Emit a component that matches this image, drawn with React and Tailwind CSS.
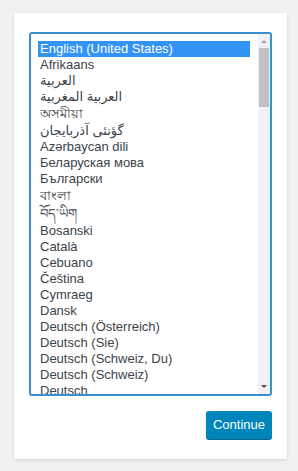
import React from 'react';

// tall: scripts whose rows render a bit taller in the native list
const languages = [
  { name: 'English (United States)' },
  { name: 'Afrikaans' },
  { name: 'العربية' },
  { name: 'العربية المغربية' },
  { name: 'অসমীয়া', tall: true },
  { name: 'گؤنئی آذربایجان' },
  { name: 'Azərbaycan dili' },
  { name: 'Беларуская мова' },
  { name: 'Български' },
  { name: 'বাংলা', tall: true },
  { name: 'བོད་ཡིག', tall: true },
  { name: 'Bosanski' },
  { name: 'Català' },
  { name: 'Cebuano' },
  { name: 'Čeština' },
  { name: 'Cymraeg' },
  { name: 'Dansk' },
  { name: 'Deutsch (Österreich)' },
  { name: 'Deutsch (Sie)' },
  { name: 'Deutsch (Schweiz, Du)' },
  { name: 'Deutsch (Schweiz)' },
  { name: 'Deutsch' },
];

export default function App() {
  return (
    <div
      className="min-h-screen bg-[#f1f1f1] pt-[13px] pl-[14px]"
      style={{ fontFamily: '"Liberation Sans", "DejaVu Sans", "Noto Sans", sans-serif' }}
    >
      <div className="w-[273px] bg-white px-[15px] pt-[19px] pb-[20px] shadow-[0_1px_3px_rgba(0,0,0,0.13)]">
        {/* language list */}
        <div className="flex h-[364px] rounded-[3px] border-2 border-[#3a8fd0] overflow-hidden">
          <div className="flex-1 overflow-hidden pt-[7px] pl-[7px] pr-[8px]">
            {languages.map((lang, idx) => (
              <div
                key={idx}
                className={
                  (lang.tall ? 'h-[18px] leading-[18px] ' : 'h-[16px] leading-[16px] ') +
                  (idx === 0
                    ? 'text-[13px] whitespace-nowrap bg-[#3394f5] text-white pl-[2px]'
                    : 'text-[13px] whitespace-nowrap text-[#3c434a] pl-[2px]')
                }
              >
                {lang.name}
              </div>
            ))}
          </div>
          {/* scrollbar */}
          <div className="w-[12px] bg-[#f1f1f1] flex flex-col items-center">
            <div className="h-[14px] flex items-center justify-center">
              <div className="w-0 h-0 border-l-[3px] border-r-[3px] border-b-[3px] border-l-transparent border-r-transparent border-b-[#a3a3a3]" />
            </div>
            <div className="w-[10px] h-[59px] bg-[#c1c1c1]" />
            <div className="flex-1" />
            <div className="h-[16px] flex items-center justify-center">
              <div className="w-0 h-0 border-l-[3px] border-r-[3px] border-t-[3px] border-l-transparent border-r-transparent border-t-[#505050]" />
            </div>
          </div>
        </div>

        <div className="flex justify-end mt-[15px]">
          <button className="h-[28px] w-[66px] rounded-[3px] bg-[#0085ba] text-white text-[13px] shadow-[0_1px_0_#006799]">
            Continue
          </button>
        </div>
      </div>
    </div>
  );
}
